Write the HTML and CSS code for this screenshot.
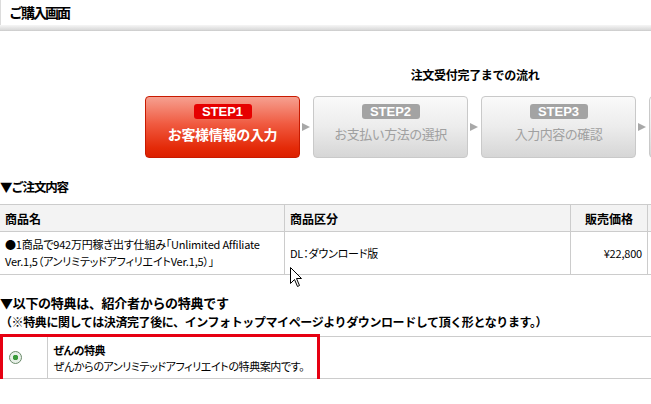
FILE: index.html
```html
<!DOCTYPE html>
<html lang="ja">
<head>
  <meta charset="UTF-8" />
  <meta name="viewport" content="width=device-width, initial-scale=1" />
  <title>ご購入画面</title>
  <link rel="stylesheet" href="styles.css">
</head>
<body>
<div class="header">
  <h1>ご購入画面</h1>
</div>

<div class="flow">
  <p class="flow-title">注文受付完了までの流れ</p>
  <div class="steps">
    <div class="step active">
      <span class="step-no">STEP1</span>
      <span class="step-name">お客様情報の入力</span>
    </div>
    <div class="arrow"></div>
    <div class="step">
      <span class="step-no">STEP2</span>
      <span class="step-name">お支払い方法の選択</span>
    </div>
    <div class="arrow"></div>
    <div class="step">
      <span class="step-no">STEP3</span>
      <span class="step-name">入力内容の確認</span>
    </div>
    <div class="arrow"></div>
    <div class="step"></div>
  </div>
</div>

<h2 class="section-title order-title">▼ご注文内容</h2>
<table class="order">
  <tr>
    <th class="col-name">商品名</th>
    <th class="col-type">商品区分</th>
    <th class="col-price">販売価格</th>
    <th class="col-more"></th>
  </tr>
  <tr>
    <td>●1商品で942万円稼ぎ出す仕組み「Unlimited Affiliate Ver.1,5（アンリミテッドアフィリエイトVer.1,5）」</td>
    <td>DL：ダウンロード版</td>
    <td class="price">¥22,800</td>
    <td></td>
  </tr>
</table>

<h2 class="section-title bonus-title">
  <span class="bonus-lead">▼以下の特典は、紹介者からの特典です</span>
  <span class="bonus-note">（※特典に関しては決済完了後に、インフォトップマイページよりダウンロードして頂く形となります。）</span>
</h2>

<div class="bonus-wrap">
  <table class="bonus">
    <tr>
      <td class="pick"><span class="radio"></span></td>
      <td class="desc">
        <strong>ぜんの特典</strong>
        <span>ぜんからのアンリミテッドアフィリエイトの特典案内です。</span>
      </td>
    </tr>
  </table>
  <div class="highlight"></div>
</div>

<svg class="cursor" width="13" height="21" viewBox="0 0 13 21">
  <path d="M0.5 0.5 L0.5 16.5 L4.5 12.5 L7.5 19.5 L9.5 18.5 L6.5 11.5 L11.5 11.5 Z" fill="#fff" stroke="#000" stroke-width="1"/>
</svg>
</body>
</html>
```

FILE: styles.css
```css
:root {
  --line: #cccccc;
  --red: #e60012;
}

html, body {
  margin: 0;
  overflow: hidden;
}

body {
  font-family: "Noto Sans CJK JP", "Noto Sans", sans-serif;
  font-size: 12px;
  color: #000;
  background: #fff;
  width: 651px;
  position: relative;
}

.header {
  height: 25px;
  border-left: 1px solid #dcdcdc;
  position: relative;
}

.header::after {
  content: "";
  position: absolute;
  left: -1px;
  right: 0;
  bottom: -6px;
  height: 6px;
  background: linear-gradient(#f6f6f6, #dadada 80%, #c8c8c8);
}

.header h1 {
  margin: 0;
  padding: 2px 0 0 8px;
  font-size: 14px;
  line-height: 20px;
  letter-spacing: -2px;
  font-weight: bold;
}

/* order flow */
.flow {
  margin: 41px 0 0 145px;
  width: 660px;
}

.flow-title {
  margin: 0 0 12px;
  text-align: center;
  font-weight: bold;
  font-size: 12px;
  line-height: 18px;
  letter-spacing: -0.3px;
}

.steps {
  display: flex;
  align-items: center;
}

.step {
  width: 155px;
  height: 62px;
  box-sizing: border-box;
  border: 1px solid #c9c9c9;
  border-radius: 4px;
  background: linear-gradient(#fafafa, #ececec 50%, #d6d6d6);
  display: flex;
  flex-direction: column;
  align-items: center;
  padding-top: 7px;
  flex-shrink: 0;
}

.step-no {
  font-family: "Liberation Sans", Arial, sans-serif;
  font-weight: bold;
  font-size: 13px;
  line-height: 15px;
  color: #fff;
  background: #a3a3a3;
  border-radius: 3px;
  width: 58px;
  text-align: center;
}

.step-name {
  margin-top: 5px;
  font-size: 13px;
  line-height: 20px;
  color: #a0a0a0;
  letter-spacing: -0.5px;
}

.step.active {
  border-color: #c81a00;
  background: linear-gradient(#f6a090, #f05a40 45%, #e42a08 85%, #dc2000);
}

.step.active .step-no {
  background: #e60000;
}

.step.active .step-name {
  color: #fff;
  font-weight: bold;
  font-size: 14px;
  letter-spacing: -0.3px;
}

.arrow {
  width: 13px;
  height: 10px;
  flex-shrink: 0;
  position: relative;
}

.arrow::before {
  content: "";
  position: absolute;
  left: 2px;
  top: 1px;
  border-left: 8px solid #a8a8a8;
  border-top: 4px solid transparent;
  border-bottom: 4px solid transparent;
}

/* sections */
.section-title {
  margin: 20px 0 0;
  font-size: 12.5px;
  line-height: 18px;
  font-weight: bold;
  letter-spacing: -0.5px;
}

.order-title {
  letter-spacing: -1.2px;
}

.order {
  margin-top: 8px;
  border-collapse: collapse;
  width: 700px;
  table-layout: fixed;
}

.order th,
.order td {
  border: 1px solid var(--line);
  padding: 0 5px;
  text-align: left;
  vertical-align: middle;
}

.order tr:first-child th {
  border-left: none;
}

.order td:first-child {
  border-left: none;
}

.order th {
  background: #f3f3f3;
  height: 26px;
  font-size: 12px;
  font-weight: bold;
}

.order td {
  height: 42px;
  font-size: 11px;
  line-height: 17px;
  letter-spacing: -0.2px;
  font-feature-settings: "palt";
}

.col-name { width: 274px; }
.col-type { width: 275px; }
.col-price { width: 66px; }

.order th.col-price {
  text-align: center;
}

.order td.price {
  text-align: right;
}

.bonus-title {
  margin-top: 19px;
}

.bonus-lead,
.bonus-note {
  display: block;
  line-height: 18.5px;
}

.bonus-lead {
  font-size: 13px;
  letter-spacing: -0.3px;
}

.bonus-note {
  font-size: 12px;
  letter-spacing: -0.4px;
}

.bonus-wrap {
  position: relative;
  margin-top: 3px;
  padding-top: 2px;
}

.bonus {
  border-collapse: collapse;
  width: 100%;
}

.bonus td {
  border-top: 1px solid var(--line);
  border-bottom: 1px solid var(--line);
  height: 41px;
}

.bonus .pick {
  width: 47px;
  border-right: 1px solid var(--line);
  padding: 0 0 0 9px;
  box-sizing: border-box;
}

.radio {
  display: block;
  width: 11px;
  height: 11px;
  border: 1px solid #6a8a6a;
  border-radius: 50%;
  background: radial-gradient(circle, #3a9a3a 0 2.5px, #e8f0e8 3px);
}

.bonus .desc {
  padding: 0 0 0 6px;
  font-size: 11px;
  line-height: 16px;
  letter-spacing: -0.4px;
  font-feature-settings: "palt";
}

.bonus .desc strong,
.bonus .desc span {
  display: block;
}

.highlight {
  position: absolute;
  left: 0;
  top: 0;
  width: 320px;
  height: 58px;
  box-sizing: border-box;
  border: 3px solid var(--red);
}

.cursor {
  position: absolute;
  left: 290px;
  top: 267px;
}
```
